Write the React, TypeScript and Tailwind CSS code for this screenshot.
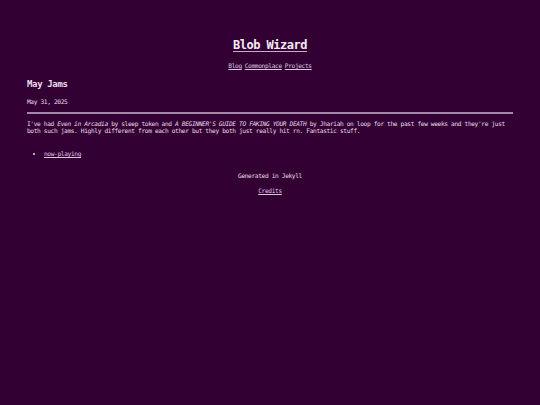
export default function App() {
  return (
    <div className="min-h-[405px] bg-[#330033] px-[27px] pt-[38px] text-[#eadcea] font-['DejaVu_Sans_Mono',monospace] text-[6.2px] leading-[7px] tracking-[-0.36px]">
      <header className="text-center">
        <h1 className="text-[12px] leading-[14px] font-bold tracking-[-0.5px]">
          <a href="#" className="text-[#f4ecf4] underline decoration-[#c9a9cf] underline-offset-[2px]">
            Blob Wizard
          </a>
        </h1>
        <nav className="mt-[10px] flex justify-center gap-[3px] text-[#dcc6e0]">
          <a href="#" className="underline">Blog</a>
          <a href="#" className="underline">Commonplace</a>
          <a href="#" className="underline">Projects</a>
        </nav>
      </header>

      <main>
        <h2 className="mt-[9.5px] text-[9px] leading-[10px] font-bold tracking-[-0.35px]">May Jams</h2>
        <p className="mt-[9.5px]">May 31, 2025</p>
        <hr className="mt-[6.5px] border-0 h-[2px] bg-[#9f88a8]" />
        <p className="mt-[6.5px]">
          I've had <em>Even in Arcadia</em> by sleep token and{" "}
          <em>A BEGINNER'S GUIDE TO FAKING YOUR DEATH</em> by Jhariah on loop for the past few weeks
          and they're just both such jams. Highly different from each other but they both just
          really hit rn. Fantastic stuff.
        </p>
        <ul className="mt-[16px] pl-[17px] list-disc">
          <li>
            <a href="#" className="underline text-[#dcc6e0]">now-playing</a>
          </li>
        </ul>
      </main>

      <footer className="text-center">
        <p className="mt-[15px]">Generated in Jekyll</p>
        <p className="mt-[8px]">
          <a href="#" className="underline text-[#dcc6e0]">Credits</a>
        </p>
      </footer>
    </div>
  );
}
